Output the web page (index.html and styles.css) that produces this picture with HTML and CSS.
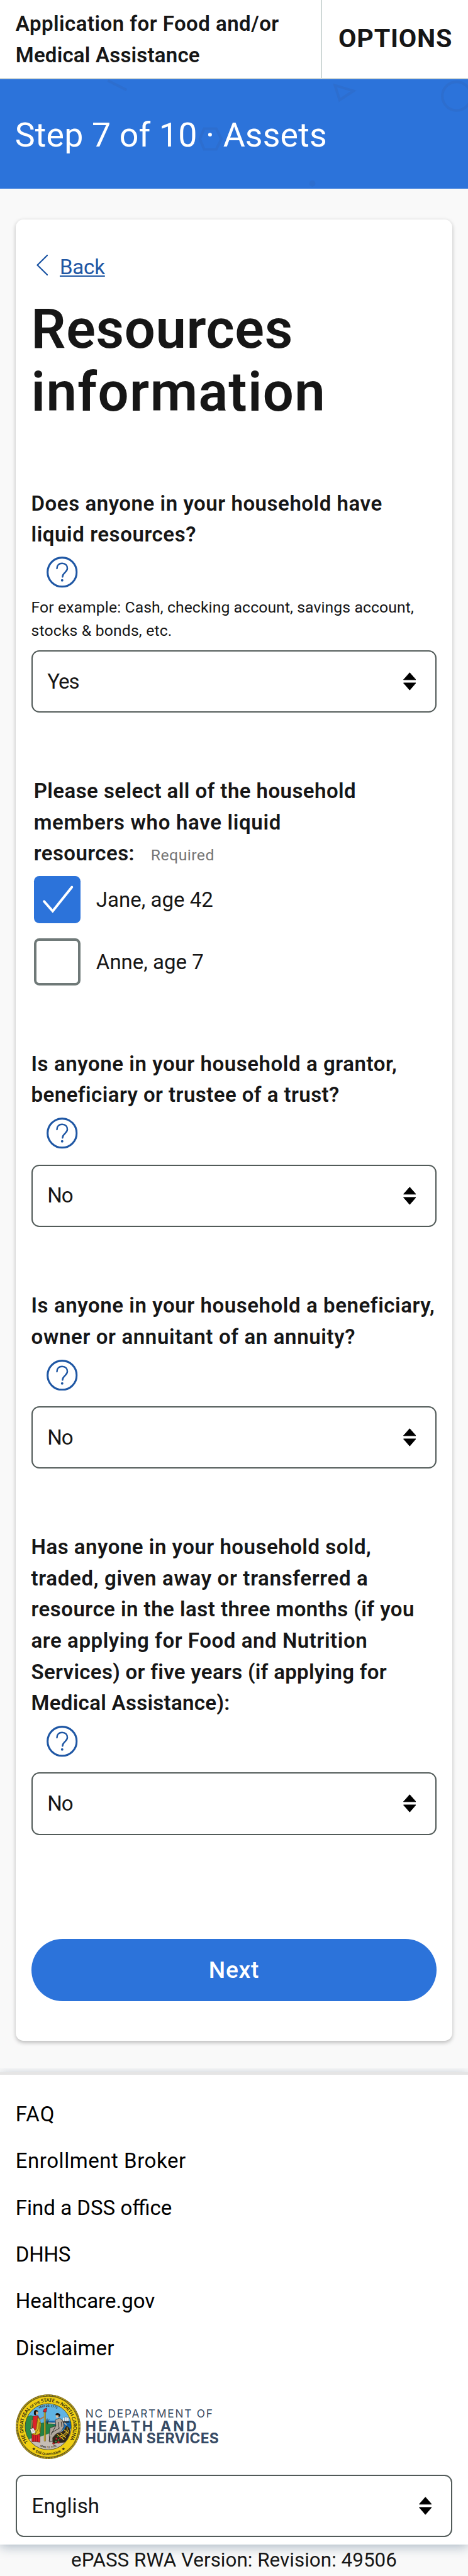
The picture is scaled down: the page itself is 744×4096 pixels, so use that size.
FILE: index.html
```html
<!DOCTYPE html>
<html lang="en">
<head>
<meta charset="utf-8">
<title>Step 7 of 10 - Assets</title>
<link rel="stylesheet" href="styles.css">
</head>
<body>
<svg class="defs" aria-hidden="true">
  <symbol id="arrows" viewBox="0 0 30 42">
    <path d="M15 1L29.200 17.200H.8Z M15 41L.8 24.600H29.200Z" fill="#000" stroke="#000" stroke-width="1.400" stroke-linejoin="round"/>
  </symbol>
  <symbol id="help" viewBox="0 0 24 24">
    <circle cx="12" cy="12" r="11.200" fill="none" stroke="#1f57a4" stroke-width="1.500"/>
    <path d="M8 9.200C8 6.600 9.600 5.200 12 5.200s4 1.500 4 3.900c0 3.100-3.700 3.300-3.700 6.500" fill="none" stroke="#1f57a4" stroke-width="1.200" stroke-linecap="round"/>
    <circle cx="12" cy="18.300" r=".95" fill="#1f57a4"/>
  </symbol>
</svg>

<header class="topbar">
  <div class="topbar-title"><span class="line s14">Application for Food and/or</span><span class="line s6">Medical Assistance</span></div>
  <div class="topbar-options">OPTIONS</div>
</header>

<section class="banner">
  <svg class="banner-art" viewBox="0 0 1080 252" fill="none" stroke="#2d6ecf" stroke-width="6" aria-hidden="true">
    <path d="M249 3L292 25"/>
    <path d="M773 14L816 27L784 48Z"/>
    <circle cx="1054" cy="39" r="33"/>
    <path d="M471 114H499L511 138L499 162H471L461 138Z"/>
    <circle cx="721" cy="241" r="7" fill="#2d6ecf" stroke="none"/>
  </svg>
  <div class="banner-title">Step 7 of 10 · Assets</div>
</section>

<main class="card">
  <a class="back"><svg class="chevron" viewBox="0 0 9 16"><path d="M8.300 .5L.7 8L8.300 15.500" fill="none" stroke="#1f57a4" stroke-width="1.100" stroke-linecap="round" stroke-linejoin="round"/></svg><span class="back-label">Back</span></a>
  <h1 class="heading"><span class="line s7">Resources</span><span class="line s16">information</span></h1>

  <div class="question">
    <div class="prompt"><span class="line s16">Does anyone in your household have</span><span class="line s17">liquid resources?</span></div>
    <svg class="help"><use href="#help"/></svg>
    <div class="hint"><span class="line s3">For example: Cash, checking account, savings account,</span><span class="line s6">stocks &amp; bonds, etc.</span></div>
    <div class="select"><span class="yes">Yes</span><svg class="arrows"><use href="#arrows"/></svg></div>
  </div>

  <div class="members">
    <div class="prompt"><span class="line s13">Please select all of the household</span><span class="line s20">members who have liquid</span><span class="line s13">resources:<span class="required">Required</span></span></div>
    <div class="check"><span class="box checked"><svg viewBox="0 0 36 36"><path d="M7.800 19.500L14.400 27L29.200 8.500" fill="none" stroke="#fff" stroke-width="1.900" stroke-linecap="round"/></svg></span><span>Jane, age 42</span></div>
    <div class="check"><span class="box"></span><span>Anne, age 7</span></div>
  </div>

  <div class="question">
    <div class="prompt"><span class="line s17">Is anyone in your household a grantor,</span><span class="line s13">beneficiary or trustee of a trust?</span></div>
    <svg class="help gap"><use href="#help"/></svg>
    <div class="select"><span class="no">No</span><svg class="arrows"><use href="#arrows"/></svg></div>
  </div>

  <div class="question">
    <div class="prompt"><span class="line s17">Is anyone in your household a beneficiary,</span><span class="line s19">owner or annuitant of an annuity?</span></div>
    <svg class="help gap"><use href="#help"/></svg>
    <div class="select"><span class="no">No</span><svg class="arrows"><use href="#arrows"/></svg></div>
  </div>

  <div class="question">
    <div class="prompt"><span class="line s15">Has anyone in your household sold,</span><span class="line s20">traded, given away or transferred a</span><span class="line s14">resource in the last three months (if you</span><span class="line s17">are applying for Food and Nutrition</span><span class="line s9">Services) or five years (if applying for</span><span class="line s9">Medical Assistance):</span></div>
    <svg class="help gap"><use href="#help"/></svg>
    <div class="select"><span class="no">No</span><svg class="arrows"><use href="#arrows"/></svg></div>
  </div>

  <div class="next">Next</div>
</main>

<footer class="footer">
  <nav class="links">
    <a class="s30">FAQ</a>
    <a class="s16">Enrollment Broker</a>
    <a>Find a DSS office</a>
    <a class="tight">DHHS</a>
    <a>Healthcare.gov</a>
    <a class="s3">Disclaimer</a>
  </nav>
  <svg class="logo" viewBox="48 57 1410 450" role="img" aria-label="NC Department of Health and Human Services">
    <defs>
      <path id="arc-top" d="M134 388A174 174 0 1 1 412 388"/>
      <path id="arc-bottom" d="M140 427A197 197 0 0 0 406 427"/>
      <path id="arc-date" d="M203 162A139 139 0 0 1 343 162"/>
      <path id="arc-date2" d="M190 406A150 150 0 0 0 356 406"/>
      <clipPath id="scene"><circle cx="273" cy="282" r="159"/></clipPath>
    </defs>
    <circle cx="273" cy="282" r="224" fill="#4b4320"/>
    <circle cx="273" cy="282" r="218" fill="none" stroke="#e6c61c" stroke-width="10" stroke-dasharray="4 3.500"/>
    <circle cx="273" cy="282" r="211" fill="#f0cf14" stroke="#3a3416" stroke-width="2"/>
    <g clip-path="url(#scene)">
      <rect x="110" y="120" width="330" height="330" fill="#60b3e4"/>
      <rect x="250" y="240" width="190" height="62" fill="#1b6db3"/>
      <path d="M270 250h40m10 8h40m20-6h50M370 270h60" stroke="#123f73" stroke-width="3"/>
      <path d="M105 225Q160 190 170 215L205 260L215 400H105Z" fill="#2c8c49" stroke="#174d2b" stroke-width="2"/>
      <path d="M180 290Q235 225 330 275L310 310L270 350L160 375Z" fill="#238145" stroke="#174d2b" stroke-width="2"/>
      <path d="M110 372L215 352L290 325L400 310L440 290V450H110Z" fill="#c5bdb5"/>
      <path d="M245 180h10v202h-10z" fill="#ecc92a" stroke="#33270b" stroke-width="2"/>
      <path d="M238 178l6-18 20-8-5 28z" fill="#d9242a" stroke="#2a1212" stroke-width="2"/>
      <path d="M167 210l35-6 14 30-4 105H160l4-50z" fill="#dc2329" stroke="#28120f" stroke-width="2"/>
      <path d="M160 333h56v57q-30-8-56-4z" fill="#dc2329" stroke="#28120f" stroke-width="2"/>
      <path d="M170 340v46M184 342v45M198 342v45" stroke="#7b1519" stroke-width="3"/>
      <path d="M200 212q22 28 22 55l-4 60-26 14-34-8 32-35z" fill="#dfb91f" stroke="#30270b" stroke-width="2"/>
      <path d="M200 235l5 60-22 38M212 250l2 68" fill="none" stroke="#4b3b0d" stroke-width="3"/>
      <path d="M212 232l36-20M162 236l-6 62" stroke="#a8744e" stroke-width="8"/>
      <path d="M174 178q5-18 22-10 10 5 6 16l-16 2 4 18-16-6z" fill="#171310"/>
      <ellipse cx="195" cy="187" rx="8" ry="11" fill="#d8a87b"/>
      <path d="M147 299l24-9 15 32-27 10z" fill="#fff" stroke="#222" stroke-width="2"/>
      <path d="M154 304l14-5m-11 13l16-6m-13 14l16-6" stroke="#555" stroke-width="2"/>
      <path d="M322 236l28-14 26 18 6 40-16 30-46 28-16 45-22 5-2-50 6-48 40-14z" fill="#b0a69c" stroke="#282321" stroke-width="3"/>
      <path d="M326 275l-34 62m60-46l-58 34m48-76l6 42m15-44l4 36M285 348l-6 34" fill="none" stroke="#2b2724" stroke-width="4"/>
      <path d="M322 258l-50-2M374 240l26 32" stroke="#d8bda0" stroke-width="7"/>
      <path d="M266 225l2 40m-10-34l10 28 12-30" fill="none" stroke="#292d20" stroke-width="3"/>
      <ellipse cx="336" cy="208" rx="10" ry="13" fill="#dcc0a0"/>
      <path d="M324 202q-2-14 14-14 20 2 18 18-4 8-12 9l2-12z" fill="#171310"/>
      <path d="M382 216v30m14-34v34m14-30v30" stroke="#222" stroke-width="2"/>
      <path d="M375 218h11v25h-11m14-28h12v29h-12m14-26h12v25h-12" fill="#e8ecef" stroke="#333" stroke-width="1"/>
      <path d="M370 245h50l-6 8h-38z" fill="#27221f"/>
      <path d="M398 277q28 5 26 45-10 50-36 68l-84 10-2-42 30-30q40 0 66-51z" fill="#302719"/>
      <path d="M404 285q8 46-50 60m62-40q-10 35-50 52M334 334l50 40m-24-48l36 34m-12-56l30 24" fill="none" stroke="#e3bd23" stroke-width="5"/>
      <g stroke="#2a1711" stroke-width="1"><g fill="#c92127"><circle cx="330" cy="365" r="7"/><circle cx="310" cy="398" r="7"/><circle cx="344" cy="390" r="8"/><circle cx="355" cy="362" r="6"/></g><g fill="#3f993d"><circle cx="344" cy="373" r="6"/><circle cx="326" cy="384" r="7"/><circle cx="338" cy="350" r="5"/></g></g>
    </g>
    <circle cx="273" cy="282" r="160" fill="none" stroke="#242113" stroke-width="3"/>
    <g class="seal-text">
      <text font-size="33" textLength="752"><textPath href="#arc-top" textLength="752">THE GREAT SEAL <tspan font-size="23">OF THE</tspan> STATE <tspan font-size="21">OF</tspan> NORTH CAROLINA</textPath></text>
      <text font-size="22" text-anchor="middle"><textPath href="#arc-bottom" startOffset="50%" textLength="184">ESSE QUAM VIDERI</textPath></text>
      <text font-size="20" text-anchor="middle"><textPath href="#arc-date" startOffset="50%" textLength="128">MAY 20, 1775</textPath></text>
      <text font-size="18" text-anchor="middle"><textPath href="#arc-date2" startOffset="50%" textLength="122">APRIL 12, 1776</textPath></text>
      <text x="160" y="446" font-size="24">★</text>
      <text x="364" y="447" font-size="24">★</text>
    </g>
    <g class="logo-text">
      <text x="531" y="217" font-size="75" textLength="880" font-weight="400">NC DEPARTMENT OF</text>
      <text font-size="100" font-weight="700"><tspan x="531" y="315" textLength="770">HEALTH AND</tspan> <tspan x="531" y="399" textLength="924">HUMAN SERVICES</tspan></text>
    </g>
  </svg>
  <div class="select"><span class="s3">English</span><svg class="arrows"><use href="#arrows"/></svg></div>
</footer>
<div class="version">ePASS RWA Version: Revision: 49506</div>
</body>
</html>
```
FILE: styles.css
```css
/* 1rem = ten layout units; the page is 36rem wide */
html { font-size: 20.656px; background: #f9f9f9; }
* { box-sizing: border-box; }
body {
  margin: 0;
  background: #f9f9f9;
  color: #161616;
  font: 400 1.6rem/2.4rem Roboto, "Liberation Sans", sans-serif;
  height: 4096px;
  overflow: hidden;
}
svg { display: block; }
.defs { position: absolute; width: 0; height: 0; }
.line { display: block; white-space: nowrap; }

.s3 { letter-spacing: .003em; }
.s6 { letter-spacing: .006em; }
.s7 { letter-spacing: .007em; }
.s9 { letter-spacing: .009em; }
.s13 { letter-spacing: .013em; }
.s14 { letter-spacing: .014em; }
.s15 { letter-spacing: .015em; }
.s16 { letter-spacing: .016em; }
.s17 { letter-spacing: .017em; }
.s19 { letter-spacing: .019em; }
.s20 { letter-spacing: .02em; }
.s30 { letter-spacing: .03em; }
.tight { letter-spacing: -.009em; }
.yes { letter-spacing: -.031em; }
.no { letter-spacing: -.035em; }

.topbar {
  display: flex;
  height: 6.1rem;
  background: #fff;
  border-bottom: .1rem solid #cfd8d7;
}
.topbar-title { width: 24.8rem; padding: .65rem 0 0 1.2rem; border-right: .1rem solid #cfd8d7; font-weight: 600; }
.topbar-options { flex: 1; padding: 0 0 0 1.25rem; font-size: 2rem; line-height: 6rem; font-weight: 700; letter-spacing: .018em; white-space: nowrap; }

.banner { position: relative; height: 8.4rem; background: #2c73da; color: #fff; }
.banner-art { position: absolute; inset: 0; width: 100%; height: 100%; }
.banner-title { position: relative; padding: .11rem 0 0 1.15rem; font-size: 2.6rem; line-height: 8.4rem; letter-spacing: .003em; }

.card {
  margin: 2.4rem 1.2rem;
  height: 140.2rem;
  padding: 2.45rem 1.2rem 0;
  background: #fff;
  border-radius: .6rem;
  box-shadow: 0 .1rem .3rem rgba(0, 0, 0, .25);
}
.back { display: flex; align-items: flex-start; gap: 1rem; padding-left: .4rem; color: #1f57a4; }
.chevron { width: .9rem; height: 1.6rem; margin-top: .25rem; }
.back-label { margin-left: -.1rem; text-decoration: underline; text-decoration-thickness: .1rem; text-underline-offset: .12rem; letter-spacing: -.006em; }
.heading { margin: 1.22rem 0 0; font-size: 4.2rem; line-height: 4.8rem; font-weight: 600; }

.question { margin-top: 4.85rem; }
.heading + .question { margin-top: 4.98rem; }
.prompt { font-weight: 600; }
.help { width: 2.4rem; height: 2.4rem; margin: .5rem 0 .59rem 1.2rem; }
.help.gap { margin: .55rem 0 1.2rem 1.2rem; }
.hint { font-size: 1.2rem; line-height: 1.8rem; margin-bottom: .61rem; }
.select {
  display: flex;
  align-items: center;
  justify-content: space-between;
  height: 4.8rem;
  padding: 0 1.5rem 0 1.15rem;
  background: #fff;
  border: .1rem solid #525b59;
  border-radius: .6rem;
}
.arrows { width: 1rem; height: 1.4rem; }

.members { margin: 4.85rem 0 0 .2rem; }
.required { margin-left: 1.25rem; font-size: 1.2rem; line-height: 0; font-weight: 400; letter-spacing: .018em; color: #757575; }
.check { display: flex; align-items: center; gap: 1.2rem; height: 3.6rem; margin-top: 1.2rem; }
.prompt + .check { margin-top: .55rem; }
.box { width: 3.6rem; height: 3.6rem; border: .2rem solid #6f7978; border-radius: .4rem; }
.box.checked { border: 0; background: #2c73da; }

.next {
  margin-top: 8rem;
  height: 4.8rem;
  border-radius: 2.4rem;
  background: #2c73da;
  color: #fff;
  text-align: center;
  font-size: 1.8rem;
  line-height: 4.8rem;
  font-weight: 500;
  letter-spacing: .021em;
}

.footer {
  height: 36.4rem;
  padding: 1.85rem 1.2rem 0;
  background: #fff;
  border-top: .2rem solid #e5e5e5;
  box-shadow: 0 .2rem .8rem rgba(60, 90, 120, .4);
  clip-path: inset(-.3rem 0 -2rem 0);
}
.links { display: flex; flex-direction: column; gap: 1.2rem; color: #000; }
.logo { width: 15.667rem; height: 5rem; margin: 2.35rem 0 1.2rem; }
.seal-text { font-family: Lato, sans-serif; font-weight: 700; fill: #2a2611; }
.logo-text { font-family: Inter, sans-serif; fill: #364a64; }
.version { text-align: center; font-size: 1.52rem; letter-spacing: .001em; position: relative; }
```
